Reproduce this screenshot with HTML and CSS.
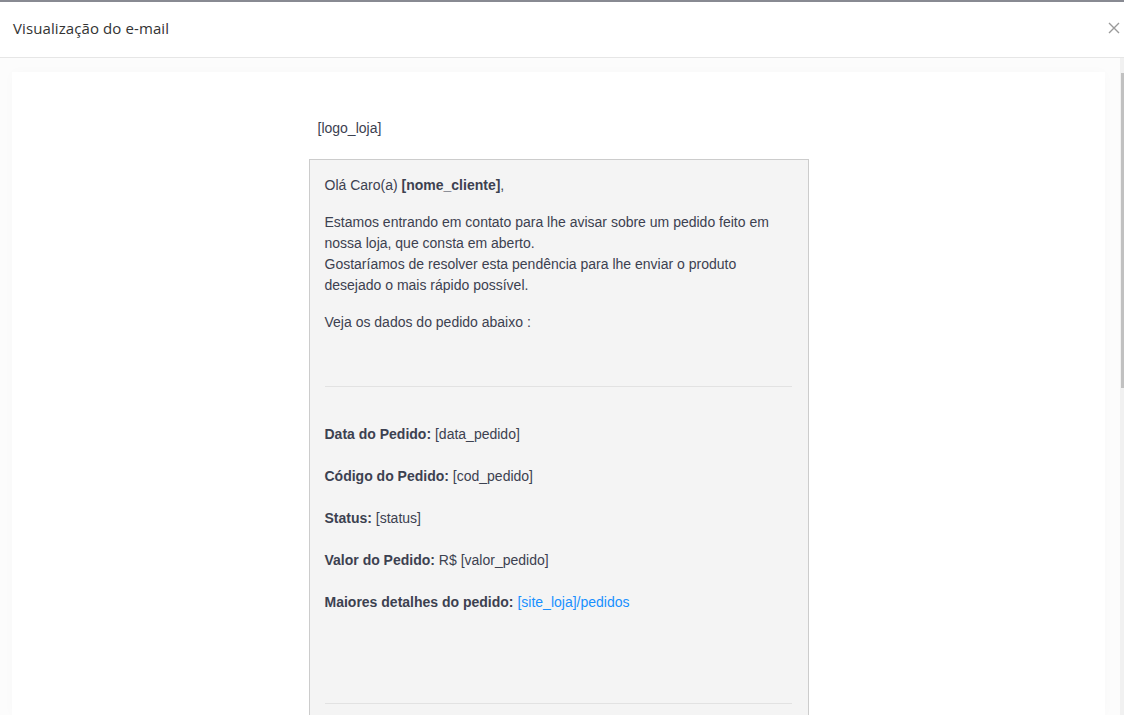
FILE: index.html
```html
<!DOCTYPE html>
<html lang="pt-BR">
<head>
    <meta charset="UTF-8">
    <meta name="viewport" content="width=device-width, initial-scale=1.0">
    <title>Visualização do e-mail</title>
    <link rel="stylesheet" href="styles.css">
</head>
<body>
    <div class="topbar"></div>
    <header class="modal-header">
        <span class="modal-title">Visualização do e-mail</span>
        <button class="close-btn" aria-label="Fechar">
            <svg width="12" height="12" viewBox="0 0 12 12">
                <path d="M1 1 L11 11 M11 1 L1 11" stroke="#9a9a9a" stroke-width="1.4" fill="none"/>
            </svg>
        </button>
    </header>
    <div class="modal-body">
        <div class="content">
            <div class="sheet">
                <div class="email">
                    <div class="logo">[logo_loja]</div>
                    <div class="email-box">
                        <p>Olá Caro(a) <b>[nome_cliente]</b>,</p>
                        <p>Estamos entrando em contato para lhe avisar sobre um pedido feito em nossa loja, que consta em aberto.<br>
                        Gostaríamos de resolver esta pendência para lhe enviar o produto desejado o mais rápido possível.</p>
                        <p>Veja os dados do pedido abaixo :</p>
                        <p>&nbsp;</p>
                        <hr>
                        <div class="details">
                            <p><b>Data do Pedido:</b> [data_pedido]</p>
                            <p><b>Código do Pedido:</b> [cod_pedido]</p>
                            <p><b>Status:</b> [status]</p>
                            <p><b>Valor do Pedido:</b> R$ [valor_pedido]</p>
                            <p><b>Maiores detalhes do pedido:</b> <a href="#">[site_loja]/pedidos</a></p>
                        </div>
                        <hr>
                        <p class="footer-note">&nbsp;</p>
                    </div>
                </div>
            </div>
        </div>
        <div class="scrollbar">
            <div class="thumb"></div>
        </div>
    </div>
</body>
</html>
```

FILE: styles.css
```css
html, body {
    margin: 0;
    height: 100%;
    overflow: hidden;
}

body {
    background-color: white;
    font-family: "Open Sans", "Liberation Sans", sans-serif;
    display: flex;
    flex-direction: column;
}

.topbar {
    height: 2px;
    background-color: #888a92;
}

.modal-header {
    height: 56px;
    box-sizing: border-box;
    display: flex;
    align-items: center;
    justify-content: space-between;
    padding: 0 4px 3px 13px;
    border-bottom: 1px solid #e6e6e6;
}

.modal-title {
    font-size: 15px;
    color: #333;
    letter-spacing: 0.1px;
}

.close-btn {
    background: none;
    border: none;
    padding: 0;
    width: 12px;
    height: 12px;
    display: flex;
    cursor: pointer;
}

.modal-body {
    flex: 1;
    display: flex;
    min-height: 0;
}

.content {
    flex: 1;
    background-color: #fcfcfc;
    padding: 14px 15px 0 12px;
    display: flex;
}

.sheet {
    flex: 1;
    background-color: white;
    box-shadow: 0 0 12px rgba(0, 0, 0, 0.02);
    overflow: hidden;
}

.email {
    width: 500px;
    margin: 0 auto;
    padding-top: 46px;
    font-family: "Liberation Sans", Arial, sans-serif;
    font-size: 14px;
    line-height: 21px;
    color: #3c4150;
}

.logo {
    padding-left: 9px;
    margin-bottom: 20px;
}

.email-box {
    border: 1px solid #cccccc;
    background-color: #f4f4f4;
    padding: 15px 16px 40px 15px;
}

.email-box p {
    margin: 0 0 16px;
}

.email-box b {
    font-weight: bold;
}

.email-box hr {
    border: none;
    border-top: 1px solid #e2e2e2;
    margin: 0;
}

.details {
    padding-top: 37px;
    padding-bottom: 69px;
}

.details p {
    margin: 0 0 21px;
}

.details a {
    color: #1890ff;
    text-decoration: none;
}

.footer-note {
    margin-top: 37px !important;
}

.scrollbar {
    width: 4px;
    background-color: #f1f1f1;
}

.thumb {
    margin-top: 15px;
    margin-left: 1px;
    width: 3px;
    height: 315px;
    background-color: #c1c1c1;
}
```
